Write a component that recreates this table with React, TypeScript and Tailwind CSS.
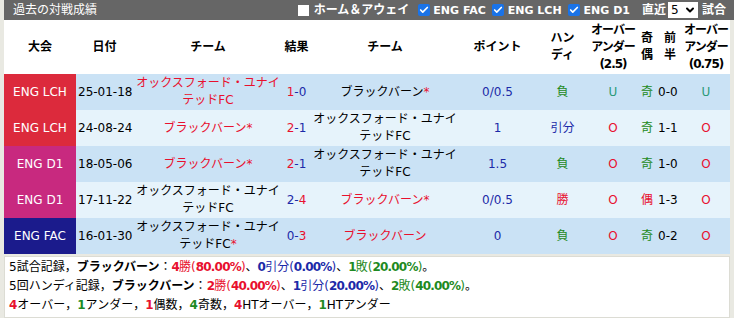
import { Check, ChevronDown } from "lucide-react";

type Team = { name: string; win: boolean; star: boolean };

interface MatchRow {
    comp: string;
    compBg: string;
    date: string;
    home: Team;
    away: Team;
    hs: number;
    as: number;
    point: string;
    handi: string;
    ou: string;
    oe: string;
    ht: string;
    ou2: string;
}

const OX = "オックスフォード・ユナイテッドFC";
const BB = "ブラックバーン";

const rows: MatchRow[] = [
    {
        comp: "ENG LCH",
        compBg: "bg-[#dc2a3c]",
        date: "25-01-18",
        home: { name: OX, win: true, star: false },
        away: { name: BB, win: false, star: true },
        hs: 1,
        as: 0,
        point: "0/0.5",
        handi: "負",
        ou: "U",
        oe: "奇",
        ht: "0-0",
        ou2: "U",
    },
    {
        comp: "ENG LCH",
        compBg: "bg-[#dc2a3c]",
        date: "24-08-24",
        home: { name: BB, win: true, star: true },
        away: { name: OX, win: false, star: false },
        hs: 2,
        as: 1,
        point: "1",
        handi: "引分",
        ou: "O",
        oe: "奇",
        ht: "1-1",
        ou2: "O",
    },
    {
        comp: "ENG D1",
        compBg: "bg-[#c8297f]",
        date: "18-05-06",
        home: { name: BB, win: true, star: true },
        away: { name: OX, win: false, star: false },
        hs: 2,
        as: 1,
        point: "1.5",
        handi: "負",
        ou: "O",
        oe: "奇",
        ht: "1-0",
        ou2: "O",
    },
    {
        comp: "ENG D1",
        compBg: "bg-[#c8297f]",
        date: "17-11-22",
        home: { name: OX, win: false, star: false },
        away: { name: BB, win: true, star: true },
        hs: 2,
        as: 4,
        point: "0/0.5",
        handi: "勝",
        ou: "O",
        oe: "偶",
        ht: "1-3",
        ou2: "O",
    },
    {
        comp: "ENG FAC",
        compBg: "bg-[#1b1b8c]",
        date: "16-01-30",
        home: { name: OX, win: false, star: true },
        away: { name: BB, win: true, star: false },
        hs: 0,
        as: 3,
        point: "0",
        handi: "負",
        ou: "O",
        oe: "奇",
        ht: "0-2",
        ou2: "O",
    },
];

const red = "text-[#e8102e]";
const blue = "text-[#1c2aa8]";
const green = "text-[#1e8a22]";

function resultColor(v: string) {
    if (v === "勝" || v === "O" || v === "偶") return red;
    if (v === "引分") return blue;
    if (v === "U") return "text-[#2a9a78]";
    return green;
}

function TeamCell({ team }: { team: Team }) {
    return (
        <td className="px-0.5 text-center">
            <span className={team.win ? red : "text-black"}>{team.name}</span>
            {team.star && <span className={red}>*</span>}
        </td>
    );
}

function CheckBox({ checked }: { checked: boolean }) {
    if (!checked) {
        return <span className="inline-block h-[11px] w-[11px] bg-white" />;
    }
    return (
        <span className="inline-flex h-[12px] w-[12px] items-center justify-center rounded-[2px] bg-[#1a73e8]">
            <Check className="h-[10px] w-[10px] text-white" strokeWidth={4} />
        </span>
    );
}

// bold figures in the summary lines, a little tighter than the default
function Num({ children }: { children: React.ReactNode }) {
    return <b className="tracking-[-0.8px]">{children}</b>;
}

export default function App() {
    return (
        <div
            className="h-[318px] w-[734px] overflow-hidden bg-[#e9e9e2] pl-[4px] text-[12px] leading-[17px] text-black"
            style={{ fontFamily: '"DejaVu Sans", "Noto Sans CJK JP", sans-serif' }}
        >
            <div className="flex h-[20px] items-center bg-[#666666] pl-[9px] text-white">
                <span>過去の対戦成績</span>
                <div className="ml-auto flex items-center pr-[8px] font-bold">
                    <CheckBox checked={false} />
                    <span className="ml-[5px]">ホーム＆アウェイ</span>
                    <span className="ml-[9px] flex"><CheckBox checked /></span>
                    <span className="ml-[3px] text-[11px]">ENG FAC</span>
                    <span className="ml-[6px] flex"><CheckBox checked /></span>
                    <span className="ml-[4px] text-[11px]">ENG LCH</span>
                    <span className="ml-[6px] flex"><CheckBox checked /></span>
                    <span className="ml-[4px] text-[11px]">ENG D1</span>
                    <span className="ml-[12px]">直近</span>
                    <span className="ml-[2px] flex h-[16px] w-[30px] items-center justify-between bg-white pl-[3px] pr-[2px] font-normal text-black">
                        5
                        <ChevronDown className="h-[12px] w-[12px]" strokeWidth={4} />
                    </span>
                    <span className="ml-[4px]">試合</span>
                </div>
            </div>
            <table className="w-[726px] table-fixed border-collapse bg-white">
                <colgroup>
                    <col className="w-[72px]" />
                    <col className="w-[57px]" />
                    <col className="w-[150px]" />
                    <col className="w-[27px]" />
                    <col className="w-[150px]" />
                    <col className="w-[75px]" />
                    <col className="w-[55px]" />
                    <col className="w-[46px]" />
                    <col className="w-[22px]" />
                    <col className="w-[24px]" />
                    <col className="w-[48px]" />
                </colgroup>
                <thead>
                    <tr className="h-[54px] font-bold">
                        <th className="text-center">大会</th>
                        <th className="text-center">日付</th>
                        <th className="text-center">チーム</th>
                        <th className="text-center">結果</th>
                        <th className="text-center">チーム</th>
                        <th className="text-center">ポイント</th>
                        <th className="px-[12px] text-center">ハンディ</th>
                        <th className="text-center tracking-[-1px]">
                            オーバー
                            <br />
                            アンダー
                            <br />
                            (2.5)
                        </th>
                        <th className="px-[5px] text-center">奇偶</th>
                        <th className="px-[6px] text-center">前半</th>
                        <th className="text-center tracking-[-1px]">
                            オーバー
                            <br />
                            アンダー
                            <br />
                            (0.75)
                        </th>
                    </tr>
                </thead>
                <tbody>
                    {rows.map((r, i) => (
                        <tr
                            key={i}
                            className={`h-[36px] ${i % 2 === 0 ? "bg-[#cae2f5]" : "bg-[#e6f3fb]"}`}
                        >
                            <td className={`${r.compBg} text-center text-white`}>{r.comp}</td>
                            <td className="pl-[2px]">{r.date}</td>
                            <TeamCell team={r.home} />
                            <td className="text-center">
                                <span className={r.hs > r.as ? red : blue}>{r.hs}</span>
                                <span className={blue}>-</span>
                                <span className={r.as > r.hs ? red : blue}>{r.as}</span>
                            </td>
                            <TeamCell team={r.away} />
                            <td className={`text-center ${blue}`}>{r.point}</td>
                            <td className={`text-center ${resultColor(r.handi)}`}>{r.handi}</td>
                            <td className={`text-center ${resultColor(r.ou)}`}>{r.ou}</td>
                            <td className={`text-center ${resultColor(r.oe)}`}>{r.oe}</td>
                            <td className="text-left">{r.ht}</td>
                            <td className={`text-center ${resultColor(r.ou2)}`}>{r.ou2}</td>
                        </tr>
                    ))}
                </tbody>
            </table>
            <div className="mt-[2px] w-[726px] border border-[#dcdcd4] bg-white px-[4px] pt-[1px] pb-[2px] leading-[19px]">
                <p>
                    5試合記録，<span className="font-bold">ブラックバーン</span>：
                    <span className={red}><Num>4</Num>勝(<Num>80.00%</Num>)</span>、
                    <span className={blue}><Num>0</Num>引分(<Num>0.00%</Num>)</span>、
                    <span className={green}><Num>1</Num>敗(<Num>20.00%</Num>)</span>。
                </p>
                <p>
                    5回ハンディ記録，<span className="font-bold">ブラックバーン</span>：
                    <span className={red}><Num>2</Num>勝(<Num>40.00%</Num>)</span>、
                    <span className={blue}><Num>1</Num>引分(<Num>20.00%</Num>)</span>、
                    <span className={green}><Num>2</Num>敗(<Num>40.00%</Num>)</span>。
                </p>
                <p>
                    <b className={red}>4</b>オーバー，<b className={green}>1</b>アンダー，
                    <b className={red}>1</b>偶数，<b className={green}>4</b>奇数，
                    <b className={red}>4</b>HTオーバー，<b className={green}>1</b>HTアンダー
                </p>
            </div>
        </div>
    );
}
